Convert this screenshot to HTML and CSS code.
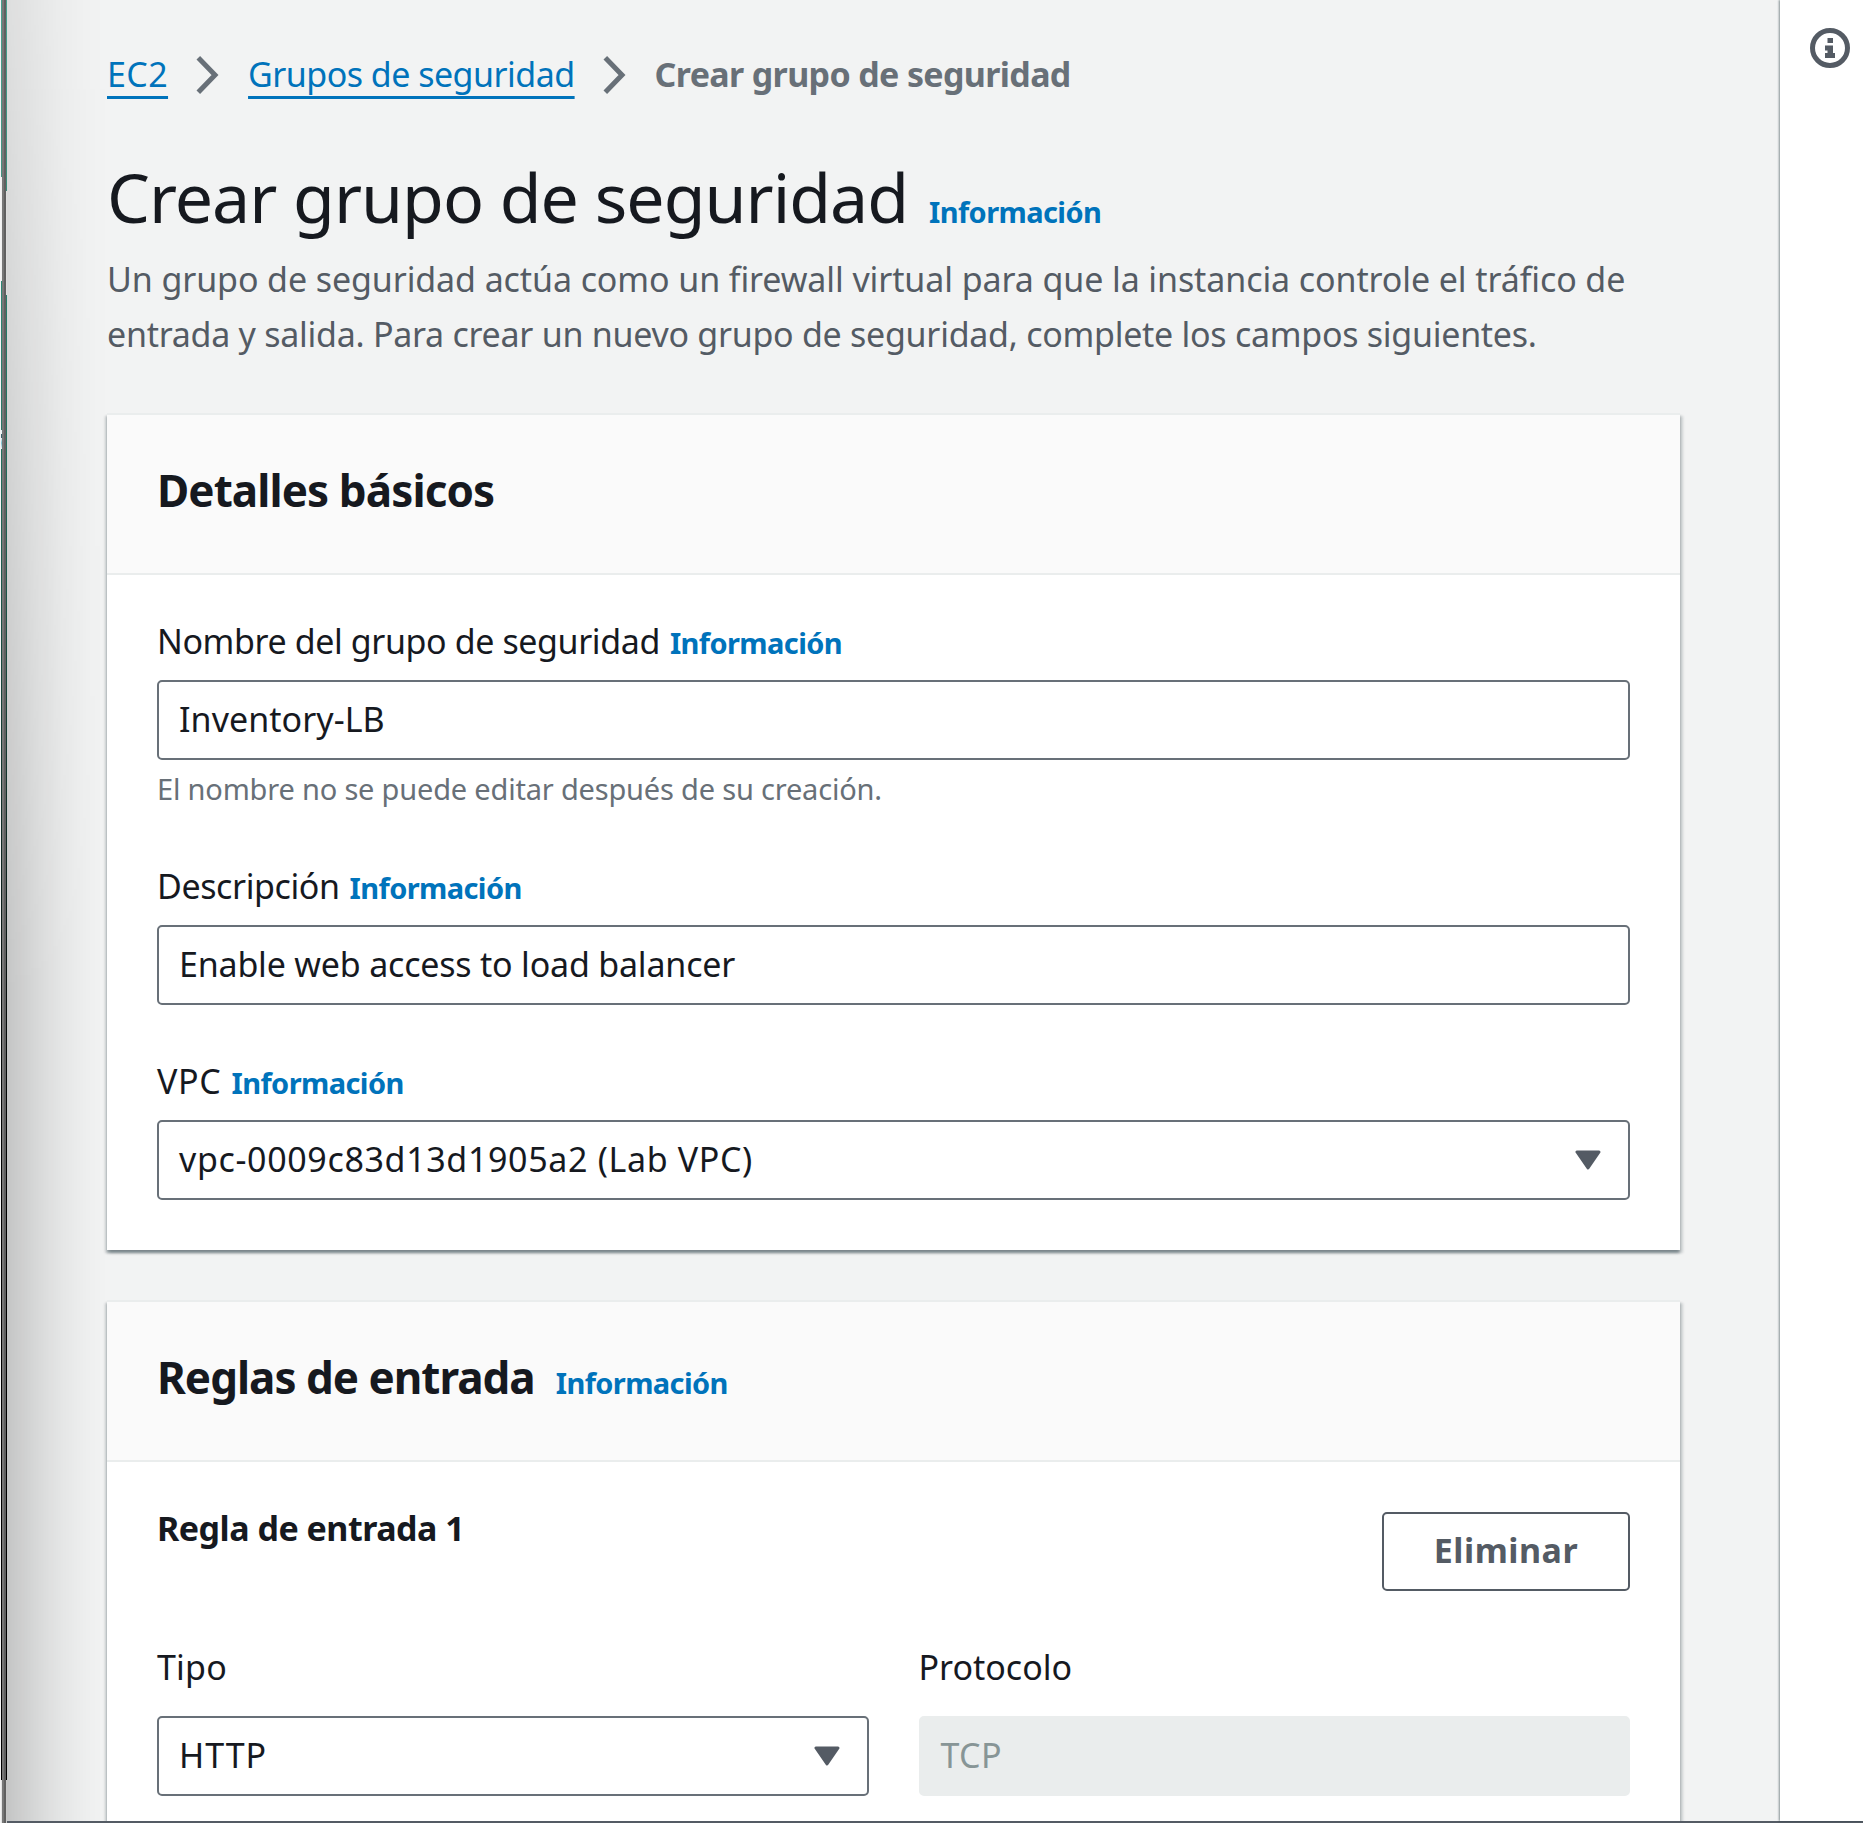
FILE: index.html
```html
<!DOCTYPE html>
<html lang="es">
<head>
<meta charset="utf-8">
<title>Crear grupo de seguridad</title>
<link rel="stylesheet" href="styles.css">
</head>
<body>
<div class="window-edge">
  <span class="edge-outer"></span>
  <span class="edge-frame"></span>
  <span class="edge-inner"></span>
</div>
<div class="window">
  <div class="layout">
    <main class="content">
      <nav class="breadcrumb">
        <a class="crumb crumb-short" href="#">EC2</a>
        <svg class="chevron" viewBox="0 0 24 38"><path d="M2.3 1.8 19 19 2.3 36.2"/></svg>
        <a class="crumb" href="#">Grupos de seguridad</a>
        <svg class="chevron" viewBox="0 0 24 38"><path d="M2.3 1.8 19 19 2.3 36.2"/></svg>
        <span class="crumb-current">Crear grupo de seguridad</span>
      </nav>
      <header class="page-header">
        <h1>Crear grupo de seguridad</h1>
        <a class="info" href="#">Información</a>
      </header>
      <p class="lead"><span class="lead-first">Un grupo de seguridad actúa como un firewall virtual para que la instancia controle el tráfico de</span><br>entrada y salida. Para crear un nuevo grupo de seguridad, complete los campos siguientes.</p>

      <section class="panel">
        <div class="panel-header"><h2>Detalles básicos</h2></div>
        <div class="panel-body details">
          <div class="field">
            <div class="label"><span>Nombre del grupo de seguridad</span><a class="info" href="#">Información</a></div>
            <div class="input text-name">Inventory-LB</div>
            <div class="hint">El nombre no se puede editar después de su creación.</div>
          </div>
          <div class="field">
            <div class="label"><span>Descripción</span><a class="info" href="#">Información</a></div>
            <div class="input">Enable web access to load balancer</div>
          </div>
          <div class="field">
            <div class="label label-vpc"><span>VPC</span><a class="info" href="#">Información</a></div>
            <div class="input select text-vpc"><span>vpc-0009c83d13d1905a2 (Lab VPC)</span>
              <svg class="caret" viewBox="0 0 26 20"><path d="M2 2H24L13 18Z"/></svg></div>
          </div>
        </div>
      </section>

      <section class="panel">
        <div class="panel-header"><h2 class="rules-title">Reglas de entrada</h2><a class="info" href="#">Información</a></div>
        <div class="panel-body">
          <div class="rule-header">
            <h3>Regla de entrada 1</h3>
            <button class="button" type="button">Eliminar</button>
          </div>
          <div class="rule-fields">
            <div class="field">
              <div class="label label-type"><span>Tipo</span></div>
              <div class="input select text-type"><span>HTTP</span>
                <svg class="caret" viewBox="0 0 26 20"><path d="M2 2H24L13 18Z"/></svg></div>
            </div>
            <div class="field">
              <div class="label label-protocol"><span>Protocolo</span></div>
              <div class="input disabled">TCP</div>
            </div>
          </div>
        </div>
      </section>
    </main>
    <aside class="tools">
      <svg class="info-icon" viewBox="0 0 40 40">
        <circle cx="20" cy="20" r="17.5"/>
        <path d="M17.5 10H23V15H17.5ZM15 17.5H23V25H25V30H15V25H17.5V22.5H15Z"/>
      </svg>
    </aside>
  </div>
  <div class="bottom-bar"></div>
</div>
</body>
</html>
```
FILE: styles.css
```css
* { box-sizing: border-box; }

body {
  margin: 0;
  width: 1863px;
  height: 1823px;
  overflow: hidden;
  display: flex;
  background: #f2f3f3;
  color: #16191f;
  font: 34px/55px "Noto Sans", "Open Sans", sans-serif;
}

h1, h2, h3, p { margin: 0; }
a { color: #0073bb; text-decoration: none; }

/* Window frame */
.window-edge { display: flex; flex: 0 0 7px; padding-left: 1px; background: #f4f4f4; }
.edge-outer, .edge-inner { width: 1px; }
.edge-outer {
  background: linear-gradient(#48a28f 0, #43917f 177px, #f0f0f0 177px, #f0f0f0 281px, #2c8773 281px, #2a7565 430px,
    #e8f4f6 430px, #e8f4f6 434px, #38616a 434px, #38616a 438px, #e8f4f6 438px, #7bc4d2 443px, #e8f4f6 449px,
    #23705e 449px, #174238 700px, #070d0c 1000px, #000 1200px, #000 1780px, #e4e4e4 1780px);
}
.edge-frame { width: 4px; background: linear-gradient(90deg, #777 50%, #606060 50%); }
.edge-inner {
  background: linear-gradient(#48a28f 0, #3b8b79 191px, #ddd 191px, #ddd 295px, #267d69 295px,
    #23705e 449px, #174238 700px, #070d0c 1000px, #000 1200px, #000 1780px, #c8c8c8 1780px);
}

.window { flex: 1; display: flex; flex-direction: column; min-width: 0; }
.layout { flex: 1; display: flex; min-height: 0; }
.bottom-bar { flex: 0 0 2px; background: #545b64; position: relative; }

.content {
  position: relative;
  z-index: 0;
  flex: 1;
  min-width: 0;
  overflow: hidden;
  padding: 47px 100px 0;
}
/* Shadow cast on the page by the window frame */
.content::before {
  content: "";
  position: absolute;
  z-index: -1;
  inset: 0 auto 0 0;
  width: 100px;
  background: linear-gradient(90deg, rgba(0,0,0,.19), rgba(0,0,0,.12) 25%, rgba(0,0,0,.05) 55%, rgba(0,0,0,.015) 80%, transparent);
  -webkit-mask-image: linear-gradient(rgba(0,0,0,.45), #000 1000px);
  mask-image: linear-gradient(rgba(0,0,0,.45), #000 1000px);
}

.tools {
  flex: 0 0 83px;
  position: relative;
  z-index: 1;
  padding: 28px 0 0 30px;
  background: #fff;
  box-shadow: -1px 0 2px rgba(0,28,36,.45);
}
.info-icon { display: block; width: 40px; height: 40px; fill: #545b64; }
.info-icon circle { fill: none; stroke: #545b64; stroke-width: 5; }

/* Breadcrumb */
.breadcrumb { display: flex; align-items: center; height: 55px; white-space: nowrap; }
.crumb {
  letter-spacing: -.52px;
  text-decoration: underline;
  text-decoration-thickness: 3px;
  text-underline-offset: 9px;
  text-decoration-skip-ink: none;
}
.crumb-short { letter-spacing: .4px; }
.crumb-current { color: #687078; font-weight: 700; letter-spacing: -.65px; }
.chevron { width: 24px; height: 38px; margin: 1px 28px 0; }
.chevron path { fill: none; stroke: #687078; stroke-width: 5; }

/* Page heading */
.page-header { display: flex; align-items: baseline; margin-top: 50px; height: 88px; white-space: nowrap; }
h1 { font-size: 68px; line-height: 90px; font-weight: 400; letter-spacing: -.98px; }
.info { font-size: 29px; line-height: 40px; font-weight: 700; letter-spacing: -.6px; }
.page-header .info { margin-left: 21px; }
.lead { margin-top: 12px; color: #545b64; letter-spacing: -.27px; white-space: nowrap; }
.lead-first { letter-spacing: -.1px; }

/* Panels */
.panel {
  margin-top: 50px;
  border-top: 2px solid #eaeded;
  background: #fff;
  box-shadow: 0 2.5px 2.5px rgba(0,28,36,.3), 2.5px 2.5px 2.5px rgba(0,28,36,.15), -2.5px 2.5px 2.5px rgba(0,28,36,.15);
}
.lead + .panel { margin-top: 51px; }
.panel-header {
  display: flex;
  align-items: baseline;
  height: 160px;
  padding: 47px 50px 0;
  background: #fafafa;
  border-bottom: 2px solid #eaeded;
}
h2 { font-size: 44px; line-height: 56px; font-weight: 700; letter-spacing: -.9px; }
.rules-title { letter-spacing: -1px; }
.panel-header .info { margin-left: 21px; }
.panel-body { padding: 50px; }
.details { display: flex; flex-direction: column; gap: 53px; padding-top: 43px; }

/* Fields */
.label { display: flex; align-items: baseline; gap: 10px; height: 44px; line-height: 46px; margin-bottom: 18px; letter-spacing: -.4px; white-space: nowrap; }
.label-vpc { letter-spacing: .7px; }
.label-type { letter-spacing: .2px; }
.label-protocol { letter-spacing: 0; }
.input {
  display: flex;
  align-items: center;
  height: 80px;
  padding: 0 18px 1px 20px;
  border: 2px solid #687078;
  border-radius: 5px;
  background: #fff;
  letter-spacing: -.2px;
}
.text-name { letter-spacing: .05px; }
.text-vpc { letter-spacing: .65px; }
.text-type { letter-spacing: .95px; }
.select { justify-content: space-between; padding-right: 27px; }
.caret { width: 26px; height: 20px; fill: #545b64; stroke: #545b64; stroke-width: 3; stroke-linejoin: round; }
.disabled { border-color: #eaeded; background: #eaeded; color: #879596; letter-spacing: .35px; }
.hint { height: 42px; margin-top: 8px; font-size: 29px; line-height: 42px; color: #687078; letter-spacing: -.19px; }

/* Inbound rule */
.rule-header { display: flex; justify-content: space-between; align-items: flex-start; }
h3 { margin-top: -6px; font-size: 34px; line-height: 44px; font-weight: 700; letter-spacing: -.5px; }
.button {
  width: 248px;
  height: 79px;
  padding: 0 0 4px;
  border: 2px solid #545b64;
  border-radius: 5px;
  background: #fff;
  color: #545b64;
  font: 700 34px/50px "Noto Sans", "Open Sans", sans-serif;
  letter-spacing: .5px;
}
.rule-fields { display: grid; grid-template-columns: 1fr 1fr; gap: 50px; margin-top: 53px; }
.rule-fields .label { margin-bottom: 28px; }
```
